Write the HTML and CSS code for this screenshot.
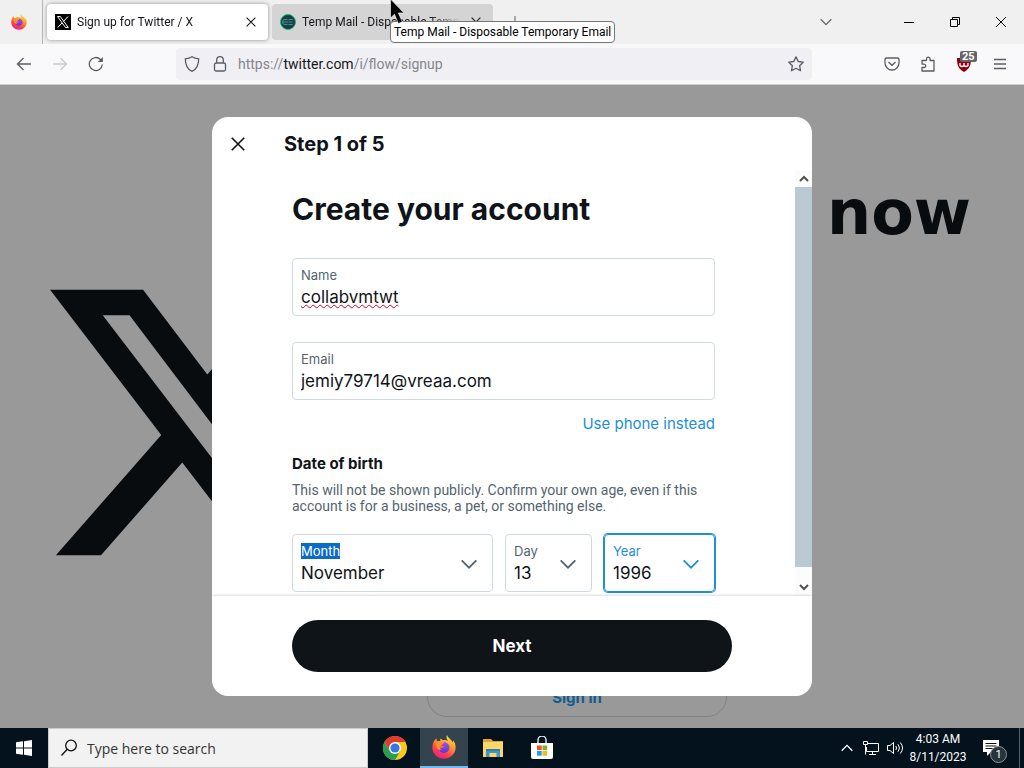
FILE: index.html
```html
<!DOCTYPE html>
<html lang="en">
<head>
<meta charset="utf-8">
<title>Sign up for Twitter / X</title>
<link rel="stylesheet" href="styles.css">
</head>
<body>
<svg class="defs" aria-hidden="true">
  <defs>
    <linearGradient id="fox" x1="0.8" y1="0" x2="0.3" y2="1"><stop offset="0" stop-color="#fff04a"/><stop offset="0.4" stop-color="#ff9a2a"/><stop offset="0.75" stop-color="#ff3b4f"/><stop offset="1" stop-color="#e8208c"/></linearGradient>
    <linearGradient id="globe" x1="0" y1="0" x2="0" y2="1"><stop offset="0" stop-color="#a04cf0"/><stop offset="1" stop-color="#5b3bd6"/></linearGradient>
    <symbol id="firefox" viewBox="0 0 32 32">
      <path fill="url(#fox)" d="M20 0c-1.500 3-.6 5.500 1.600 7.600-2-.9-4-1-5.600-.8-2.300-.2-3.500-1-4.300-2.100-.8.900-1 2.100-.8 3.300-1.300-.2-2.500-.1-3.600.2C6 7 5.800 5.600 6 4.200 3.200 6.300.5 10.800.5 16.500.5 25 7.500 31.500 16 31.500S31.500 25 31.500 16.500c0-4-1.500-7.500-3.500-9.500.3 1.400.3 2.500 0 3.600C26.500 6 21.500 4.500 20 0z"/>
      <path fill="url(#globe)" d="M16 9.500c3.900 0 7.200 3.100 7.200 7.200S20 24 16 24c-4.200 0-7.300-3.200-7.300-7 1 .9 2.200 1.200 3.400.8 1.500-.4 2.300-1.500 4-1.700-.2-1.200-2-1.500-4.100-1.500.2-2.500 2-3 4-5.100z"/>
      <path fill="#ff9128" d="M5.500 10.500c2-1.300 4.500-1.200 6-.3 1.500 0 3-.2 4.800.6-1.500.3-2.700 1.500-2.900 2.800-1.500.2-2.400 1-2.800 2.300-.5 1.500.5 3.200 2 3.800-4 1-7-2-7.100-9.200z"/>
    </symbol>
    <symbol id="x-logo" viewBox="0 0 24 24"><path d="M18.244 2.250h3.308l-7.227 8.260 8.502 11.240H16.170l-5.214-6.817L4.990 21.750H1.680l7.730-8.835L1.254 2.250H8.080l4.713 6.231zm-1.161 17.520h1.833L7.084 4.126H5.117z"/></symbol>
    <symbol id="cross" viewBox="0 0 16 16"><path d="M3 3l10 10M13 3L3 13"/></symbol>
    <symbol id="chevron" viewBox="0 0 24 24"><path d="M4 8l8 8 8-8"/></symbol>
  </defs>
</svg>

<header class="tabstrip">
  <button class="pinned" aria-label="Firefox View"><svg width="16" height="16"><use href="#firefox"/></svg></button>
  <div class="tab active">
    <svg class="favicon" width="16" height="16" viewBox="0 0 16 16"><rect width="16" height="16" fill="#000"/><path d="M2.500 2.500h2.800l8 11h-2.800zM13 2.500l-4.600 5M7.200 8.800l-4.500 4.700" fill="none" stroke="#fff"/></svg>
    <span class="tab-title">Sign up for Twitter / X</span>
    <button class="tab-close" aria-label="Close tab"><svg class="line" width="14" height="14"><use href="#cross"/></svg></button>
  </div>
  <div class="tab inactive">
    <svg class="favicon" width="16" height="16" viewBox="0 0 16 16"><circle cx="8" cy="8" r="7.500" fill="#213b40" stroke="#19b091"/><path d="M7.500 5.500H5a2.500 2.500 0 000 5h2.500M8.500 5.500h4M8.500 8h4M8.500 10.500h4M3 8h5" fill="none" stroke="#1fa78c"/></svg>
    <span class="tab-title">Temp Mail - Disposable Temporary Email</span>
    <button class="tab-close" aria-label="Close tab"><svg class="line" width="14" height="14"><use href="#cross"/></svg></button>
  </div>
  <button class="new-tab" aria-label="New tab"><svg class="line" width="16" height="16" viewBox="0 0 16 16"><path d="M8 2v12M2 8h12"/></svg></button>
  <button class="list-tabs" aria-label="List all tabs"><svg class="line" width="16" height="16"><use href="#chevron"/></svg></button>
  <div class="window-controls">
    <button aria-label="Minimize"><svg width="12" height="12" viewBox="0 0 12 12"><path d="M1 6.500h10" stroke="#000" fill="none"/></svg></button>
    <button aria-label="Restore"><svg width="12" height="12" viewBox="0 0 12 12"><path d="M1.500 3.500h7v7h-7zM3.500 3.500v-2h7v7h-2" stroke="#000" fill="none"/></svg></button>
    <button aria-label="Close"><svg width="12" height="12" viewBox="0 0 12 12"><path d="M1 1l10 10M11 1L1 11" stroke="#000" fill="none"/></svg></button>
  </div>
  <div class="tooltip" role="tooltip">Temp Mail - Disposable Temporary Email</div>
  <svg class="cursor" width="15" height="26" viewBox="0 0 15 26"><path d="M.500-1v19l4-3.800 3.800 9.300 4-1.700-3.900-8.800H14z" fill="#000" stroke="#fff" stroke-width=".6"/></svg>
</header>

<nav class="toolbar">
  <button aria-label="Back"><svg class="tool" width="16" height="16" viewBox="0 0 16 16"><path d="M15 8H1.500M7.500 2l-6 6 6 6"/></svg></button>
  <button aria-label="Forward" disabled><svg class="tool" width="16" height="16" viewBox="0 0 16 16"><path d="M1 8h13.500M8.500 2l6 6-6 6"/></svg></button>
  <button aria-label="Reload"><svg class="tool" width="16" height="16" viewBox="0 0 16 16"><path d="M14.300 8.500A6.500 6.500 0 1112.500 3.500L14 5"/><path class="solid" d="M14.800 1v5h-5z"/></svg></button>
  <div class="urlbar">
    <svg class="tool" width="16" height="16" viewBox="0 0 16 16"><path d="M8 .8c2 1.300 4.300 1.900 6.700 2C14.700 9 12.500 13.500 8 15.300 3.500 13.500 1.300 9 1.300 2.800 3.700 2.700 6 2.100 8 .8z"/></svg>
    <svg class="tool" width="16" height="16" viewBox="0 0 16 16"><rect x="2.500" y="7" width="11" height="8" rx="1.500"/><path d="M4.700 7V4a3.300 3.300 0 016.600 0v3"/></svg>
    <a class="address" href="#">https://<b>twitter.com</b>/i/flow/signup</a>
    <svg class="tool" width="16" height="16" viewBox="0 0 16 16"><path stroke-linejoin="round" d="M8 .9l2.200 4.600 5 .7-3.600 3.500.9 5L8 12.300l-4.500 2.400.9-5L.8 6.200l5-.7z"/></svg>
  </div>
  <button aria-label="Save to Pocket"><svg class="tool" width="16" height="16" viewBox="0 0 16 16"><path d="M2.500 2h11A1.500 1.500 0 0115 3.500V7A7 7 0 011 7V3.500A1.500 1.500 0 012.500 2zM4.500 6L8 9.300 11.500 6"/></svg></button>
  <button aria-label="Extensions"><svg class="tool" width="16" height="16" viewBox="0 0 16 16"><path stroke-linejoin="round" d="M2 7V4.500h4.500V3a1.800 1.800 0 013.600 0v1.500H14V15H2v-3.500h2a1.700 1.700 0 000-3.400H2z"/></svg></button>
  <button class="shield" aria-label="uBlock Origin"><svg width="16" height="16" viewBox="0 0 16 16"><path fill="#8c0011" d="M8 0c2 1.500 4 2 7 2 0 7-1 10.500-7 14C2 12.500 1 9 1 2c3 0 5-.5 7-2z"/><path d="M4 7v2.500q2 2 4 0V7M8 9.500q2 2 4 0V7" fill="none" stroke="#fff" stroke-width="1.300"/></svg><span class="badge">25</span></button>
  <button aria-label="Menu"><svg class="tool" width="16" height="16" viewBox="0 0 16 16"><path d="M2 3.500h12M2 8h12M2 12.500h12"/></svg></button>
</nav>

<div class="viewport">
  <div class="landing">
    <div class="brand"><svg class="brand-mark"><use href="#x-logo"/></svg></div>
    <div class="intro">
      <h2>Happening now</h2>
      <a class="sign-in" href="#">Sign in</a>
    </div>
  </div>
  <div class="backdrop">
    <main class="modal" role="dialog" aria-labelledby="step">
      <header class="modal-head">
        <button class="modal-close" aria-label="Close"><svg class="close-icon" width="20" height="20"><use href="#cross"/></svg></button>
        <h2 id="step">Step 1 of 5</h2>
      </header>
      <div class="modal-body">
        <form class="form" id="signup">
          <h1>Create your account</h1>
          <div class="field">
            <label for="name">Name</label>
            <input class="misspelled" id="name" type="text" value="collabvmtwt">
          </div>
          <div class="field">
            <label for="email">Email</label>
            <input id="email" type="email" value="jemiy79714@vreaa.com">
          </div>
          <a class="phone" href="#">Use phone instead</a>
          <h3>Date of birth</h3>
          <p>This will not be shown publicly. Confirm your own age, even if this account is for a business, a pet, or something else.</p>
          <div class="dates">
            <div class="field pick">
              <label for="month"><mark>Month</mark></label>
              <select id="month"><option>November</option></select>
              <svg class="arrow" width="22" height="22"><use href="#chevron"/></svg>
            </div>
            <div class="field pick">
              <label for="day">Day</label>
              <select id="day"><option>13</option></select>
              <svg class="arrow" width="22" height="22"><use href="#chevron"/></svg>
            </div>
            <div class="field pick focused">
              <label for="year">Year</label>
              <select id="year"><option>1996</option></select>
              <svg class="arrow" width="22" height="22"><use href="#chevron"/></svg>
            </div>
          </div>
        </form>
        <div class="scrollbar">
          <button type="button" aria-label="Scroll up"><svg class="up" width="12" height="12"><use href="#chevron"/></svg></button>
          <div class="track"><div class="thumb"></div></div>
          <button type="button" aria-label="Scroll down"><svg width="12" height="12"><use href="#chevron"/></svg></button>
        </div>
      </div>
      <footer class="modal-foot"><button class="next" form="signup">Next</button></footer>
    </main>
  </div>
</div>

<footer class="taskbar">
  <button class="start" aria-label="Start"><svg width="16" height="16" viewBox="0 0 16 16"><path fill="#fff" d="M0 2.300l7-1V7.600H0zM8 1.200L16 0v7.600H8zM0 8.500h7v6.300l-7-1zM8 8.500h8V16l-8-1.200z"/></svg></button>
  <div class="search">
    <svg width="18" height="18" viewBox="0 0 18 18"><circle cx="11" cy="6.500" r="5.300" fill="none" stroke="#111" stroke-width="1.300"/><path d="M7.200 10.300L1.500 16.500" stroke="#111" stroke-width="1.300"/></svg>
    <input type="text" aria-label="Type here to search" placeholder="Type here to search">
  </div>
  <div class="apps">
    <button aria-label="Chrome"><svg width="24" height="24" viewBox="0 0 24 24"><circle cx="12" cy="12" r="12" fill="#fbc919"/><path fill="#e13b30" d="M1.600 6A12 12 0 0122.400 6H12L6.800 15z"/><path fill="#2a9d4e" d="M1.600 6A12 12 0 0012 24l5.200-9H6.800z"/><circle cx="12" cy="12" r="6" fill="#fff"/><circle cx="12" cy="12" r="4.600" fill="#3478e4"/></svg></button>
    <button class="running" aria-label="Firefox"><svg width="24" height="24"><use href="#firefox"/></svg></button>
    <button aria-label="File Explorer"><svg width="22" height="20" viewBox="0 0 22 20"><path fill="#e3a52d" d="M1 1h8l2 2h10v4H1z"/><path fill="#fcd669" d="M1 4h20v15H1z"/><path fill="#3d97c8" d="M4 11h14v8h-3.500v-4h-7v4H4z"/><path fill="#2e7fae" d="M4 11h14v2H4z"/></svg></button>
    <button aria-label="Microsoft Store"><svg width="24" height="24" viewBox="0 0 24 24"><path d="M8 7V4a4 4 0 018 0v3" fill="none" stroke="#dce5ea" stroke-width="1.500"/><path fill="#fff" d="M1 7h22v14a2 2 0 01-2 2H3a2 2 0 01-2-2z"/><path fill="#e8502a" d="M7 9.500h4.700v4.700H7z"/><path fill="#7fb02c" d="M12.500 9.500h4.700v4.700h-4.700z"/><path fill="#1f9fe0" d="M7 15h4.700v4.700H7z"/><path fill="#f3b81f" d="M12.500 15h4.700v4.700h-4.700z"/></svg></button>
  </div>
  <div class="tray">
    <button aria-label="Show hidden icons"><svg class="up glyph" width="16" height="16"><use href="#chevron"/></svg></button>
    <button aria-label="Network"><svg class="glyph" width="18" height="16" viewBox="0 0 18 16"><path d="M5 3.500h11.500v8H4.500V7M10.500 11.500v3M7 14.500h7M1.500 1.500h4v3h-4zM3.500 4.500v10"/></svg></button>
    <button aria-label="Volume"><svg class="glyph" width="18" height="16" viewBox="0 0 18 16"><path d="M1.500 5.500h2.500l3.500-3v11l-3.500-3H1.500zM9.800 6q1.500 2 0 4M12 4.300q3 3.700 0 7.400M14.300 2.500q4.500 5.500 0 11"/></svg></button>
  </div>
  <time class="clock" datetime="2023-08-11T04:03"><span>4:03 AM</span><span>8/11/2023</span></time>
  <button class="notes" aria-label="Notifications"><svg width="18" height="18" viewBox="0 0 18 18"><path fill="#fff" d="M1 1h16v12H9l-4 4v-4H1z"/><path d="M3.500 4.500h11M3.500 7h11M3.500 9.500h7" stroke="#06131f"/></svg><span class="count">1</span></button>
  <button class="peek" aria-label="Show desktop"></button>
</footer>
</body>
</html>
```

FILE: styles.css
```css
* { box-sizing: border-box; }
body {
  margin: 0;
  height: 100vh;
  display: flex;
  flex-direction: column;
  overflow: hidden;
  font-family: Roboto, "Noto Sans", sans-serif;
  font-size: 12px;
  color: #15141a;
}
button { border: 0; padding: 0; background: none; font: inherit; color: inherit; display: flex; align-items: center; justify-content: center; }
a { text-decoration: none; color: inherit; }
h1, h2, h3, p { margin: 0; }
svg { flex: none; }
.defs { position: absolute; width: 0; height: 0; }

/* Tab strip */
.tabstrip { position: relative; display: flex; align-items: center; height: 44px; background: #f0f0f0; flex: none; }
.pinned { width: 43px; height: 44px; border-right: 1px solid #b4b4b4; padding-right: 4px; }
.tab { display: flex; align-items: center; gap: 6px; width: 221px; height: 36px; padding: 0 8px; border-radius: 4px; }
.tab.active { margin-left: 4px; background: #fff; box-shadow: 0 0 4px rgba(0, 0, 0, .4); }
.tab.inactive { margin-left: 4px; background: #d4d4d4; }
.tab-title { flex: 1; overflow: hidden; white-space: nowrap; mask-image: linear-gradient(to left, transparent, #000 32px); }
.tab-close { width: 18px; height: 18px; }
.line { fill: none; stroke: #15141a; stroke-width: 1.2; }
.new-tab { width: 36px; height: 36px; margin-left: 4px; }
.new-tab .line { stroke: #777; }
.list-tabs { width: 36px; height: 36px; margin-left: auto; margin-right: 42px; }
.list-tabs .line { stroke: #666; stroke-width: 2; }
.window-controls { display: flex; height: 44px; }
.window-controls button { width: 46px; }
.tooltip { position: absolute; z-index: 5; left: 390px; top: 21px; height: 22px; padding: 0 3px; border: 1px solid #767676; border-radius: 4px; background: #fff; color: #000; line-height: 20px; white-space: nowrap; }
.cursor { position: absolute; z-index: 6; left: 390px; top: 0; }

/* Toolbar */
.toolbar { display: flex; align-items: center; height: 41px; flex: none; padding: 0 6px; background: #f9f9fb; border-bottom: 1px solid #ccc; }
.toolbar button { width: 36px; height: 36px; }
.toolbar button:disabled { opacity: .3; }
.tool { fill: none; stroke: #5b5b66; stroke-width: 1.3; }
.tool .solid { fill: #5b5b66; stroke: none; }
.urlbar { flex: 1; display: flex; align-items: center; gap: 12px; height: 32px; margin: 0 62px; padding: 0 8px; border-radius: 4px; background: #f0f0f4; }
.address { flex: 1; margin-left: -2px; font-size: 14px; color: #85858c; }
.address b { font-weight: 400; color: #15141a; }
.toolbar .shield { position: relative; }
.badge { position: absolute; left: 14px; top: 5px; padding: 0 2px; border-radius: 2px; background: #666; color: #fff; font-size: 11px; font-weight: 700; line-height: 11px; }

/* Page behind the dialog */
.viewport { position: relative; flex: 1; min-height: 0; overflow: hidden; font-family: Inter, "Liberation Sans", sans-serif; color: #0f1419; background: #fff; }
.landing { display: flex; height: 100%; }
.brand { flex: none; width: 392px; display: flex; align-items: center; justify-content: center; padding-top: 32px; }
.brand-mark { width: 327px; height: 327px; fill: currentColor; }
.intro { flex: 1; min-width: 0; display: flex; flex-direction: column; justify-content: space-between; align-items: flex-start; padding: 92px 0 11px 35px; }
.intro h2 { font: 700 62px/72px "DejaVu Sans", sans-serif; white-space: nowrap; }
.sign-in { display: flex; align-items: center; justify-content: center; width: 300px; height: 40px; border: 1px solid #cfd9de; border-radius: 20px; color: #1d9bf0; font-size: 15px; font-weight: 700; }
.backdrop { position: absolute; inset: 0; display: flex; align-items: center; justify-content: center; background: rgba(0, 0, 0, .4); }

/* Dialog */
.modal { display: flex; flex-direction: column; width: 600px; max-width: 100%; height: 90%; border-radius: 16px; background: #fff; overflow: hidden; }
.modal-head { display: flex; align-items: center; gap: 28px; height: 53px; flex: none; padding: 0 8px; }
.modal-head h2 { font-size: 20px; line-height: 24px; }
.modal-close { width: 36px; height: 36px; }
.close-icon { fill: none; stroke: #0f1419; stroke-width: 1.3; }
.modal-body { flex: 1; min-height: 0; display: flex; overflow: hidden; }
.form { flex: 1; display: flex; flex-direction: column; padding: 20px 80px 0; }
.form h1 { font-size: 30px; line-height: 38px; margin-bottom: 30px; }
.field { height: 58px; flex: none; display: grid; grid-template-rows: 18px 24px; padding: 8px; border: 1px solid #cfd9de; border-radius: 4px; }
.field + .field { margin-top: 26px; }
.field label { font-size: 13px; line-height: 16px; color: #536471; }
.field input, .field select { width: 100%; min-width: 0; padding: 0; border: 0; outline: 0; background: none; appearance: none; font: inherit; font-size: 17px; line-height: 24px; color: #0f1419; }
.misspelled { text-decoration: underline wavy #d70022 1px; }
.phone { align-self: flex-end; margin: 14px 0 20px; font-size: 15px; line-height: 20px; color: #1d8fd8; }
.form h3 { font-size: 15px; line-height: 20px; margin-bottom: 8px; }
.form p { font-family: Roboto, "Liberation Sans", sans-serif; font-size: 14px; line-height: 16px; color: #536471; margin-bottom: 20px; }
.dates { display: grid; grid-template-columns: 201fr 87fr 111fr; gap: 12px; }
.dates .field { margin: 0; }
.pick { grid-template-columns: 1fr 22px; padding-right: 12px; }
.pick label, .pick select { grid-column: 1; }
.arrow { grid-column: 2; grid-row: 1 / 3; align-self: center; fill: none; stroke: #536471; stroke-width: 2; }
.focused { border-color: #1d8fd8; box-shadow: 0 0 0 1px #1d8fd8; }
.focused label { color: #1d8fd8; }
.focused .arrow { stroke: #1d8fd8; }
mark { background: #0a6cc4; color: #fff; }
.scrollbar { flex: none; width: 17px; display: flex; flex-direction: column; background: #fcfcfc; }
.scrollbar button { height: 17px; }
.scrollbar svg { fill: none; stroke: #505050; stroke-width: 4; }
.up { transform: rotate(180deg); }
.track { flex: 1; }
.thumb { height: 97%; background: #b9cad3; }
.modal-foot { flex: none; padding: 24px 80px; box-shadow: 0 0 3px rgba(0, 0, 0, .25); }
.next { width: 100%; height: 52px; border-radius: 26px; background: #0f1419; color: #fff; font-size: 17px; font-weight: 700; }

/* Taskbar */
.taskbar { display: flex; height: 40px; flex: none; background: #04121e; color: #fff; }
.start { width: 48px; }
.search { display: flex; align-items: center; gap: 9px; width: 320px; padding: 0 12px 0 11px; background: #f2f2f2; border: 1px solid #ccc; }
.search input { flex: 1; min-width: 0; border: 0; padding: 0; background: none; font-family: "Open Sans", "Noto Sans", sans-serif; font-size: 14px; }
.search input::placeholder { color: #333; opacity: 1; }
.apps { display: flex; gap: 1px; margin-left: 3px; }
.apps button { width: 48px; }
.apps .running { background: #34444e; border-bottom: 2px solid #76b9ed; }
.tray { display: flex; margin-left: auto; }
.tray button { width: 24px; }
.glyph { fill: none; stroke: #fff; stroke-width: 1; }
.tray .up { stroke-width: 2; }
.clock { display: flex; flex-direction: column; align-items: center; justify-content: center; width: 62px; line-height: 18px; }
.notes { position: relative; width: 50px; padding-right: 6px; }
.count { position: absolute; left: 21px; top: 18px; width: 17px; height: 17px; border: 1px solid #8a939a; border-radius: 50%; background: #27333d; font-size: 11px; line-height: 15px; }
.peek { width: 5px; border-left: 1px solid #55616b; }
```
